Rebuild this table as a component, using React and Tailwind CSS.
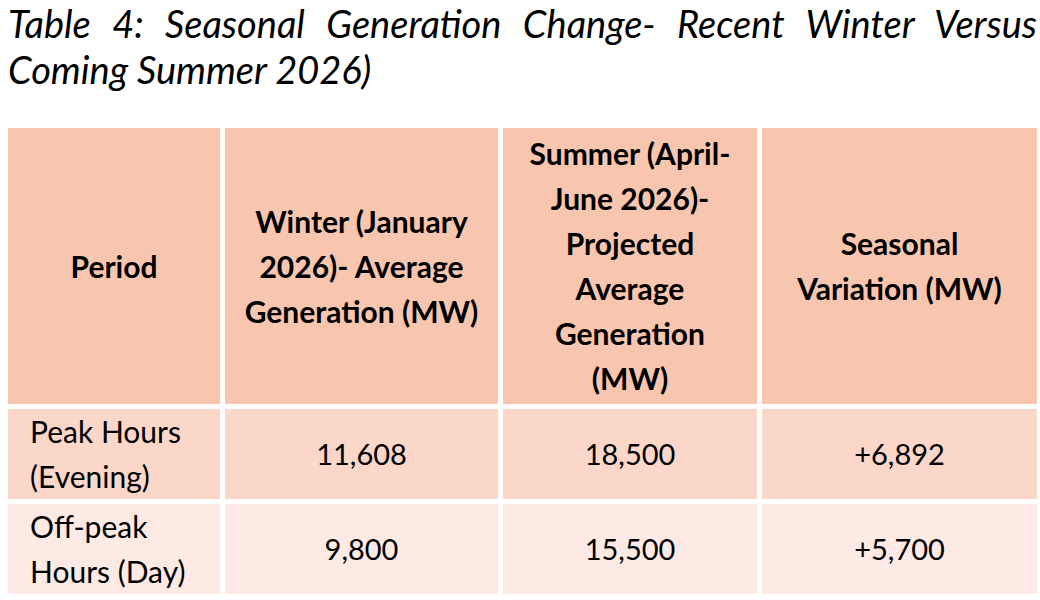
const headers = [
  ['Period'],
  ['Winter (January', '2026)- Average', 'Generation (MW)'],
  ['Summer (April-', 'June 2026)-', 'Projected', 'Average', 'Generation', '(MW)'],
  ['Seasonal', 'Variation (MW)'],
];

const rows = [
  { period: ['Peak Hours', '(Evening)'], winter: '11,608', summer: '18,500', diff: '+6,892', bg: 'bg-[#fbd7c9]' },
  { period: ['Off-peak', 'Hours (Day)'], winter: '9,800', summer: '15,500', diff: '+5,700', bg: 'bg-[#fdeae4]' },
];

export default function App() {
  return (
    <div className="w-[1040px] h-[600px] bg-white overflow-hidden pl-2 pr-[3px] font-['Lato',sans-serif] text-black">
      {/* Caption, first line justified edge to edge */}
      <div className="text-[38px] leading-[46px] italic">
        <p className="text-justify [text-align-last:justify]">Table 4: Seasonal Generation Change- Recent Winter Versus</p>
        <p>Coming Summer 2026)</p>
      </div>

      {/* Table */}
      <div className="mt-[36px] grid grid-cols-[212px_273px_254px_275px] gap-[5px]">
        {headers.map((lines, i) => (
          <div key={i} className="h-[276px] bg-[#f8c6ae] flex flex-col items-center justify-center text-center font-bold text-[30px] leading-[45px]">
            {lines.map((l) => (
              <span key={l} className="whitespace-nowrap">{l}</span>
            ))}
          </div>
        ))}

        {rows.map((r) => (
          <div key={r.winter} className="contents">
            <div className={`${r.bg} h-[90px] flex flex-col justify-center pl-[22px] text-[30px] leading-[45px]`}>
              {r.period.map((l) => (
                <span key={l} className="whitespace-nowrap">{l}</span>
              ))}
            </div>
            <div className={`${r.bg} h-[90px] flex items-center justify-center text-[29px]`}>{r.winter}</div>
            <div className={`${r.bg} h-[90px] flex items-center justify-center text-[29px]`}>{r.summer}</div>
            <div className={`${r.bg} h-[90px] flex items-center justify-center text-[29px]`}>{r.diff}</div>
          </div>
        ))}
      </div>
    </div>
  );
}
